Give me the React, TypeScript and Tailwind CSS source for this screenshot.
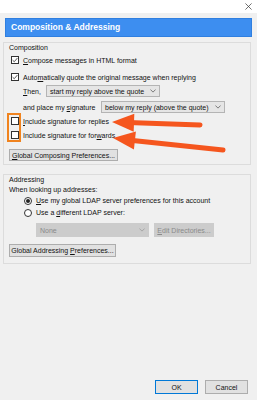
import React from 'react';

function Check({ checked }: { checked?: boolean }) {
  return (
    <span className="w-[8px] h-[8px] border border-[#333333] bg-white flex items-center justify-center shrink-0">
      {checked && (
        <svg viewBox="0 0 8 8" className="w-[6px] h-[6px]">
          <path d="M0.8 4.2 L3 6.3 L7.2 1.4" fill="none" stroke="#222222" strokeWidth="1" />
        </svg>
      )}
    </span>
  );
}

function Radio({ checked }: { checked?: boolean }) {
  return (
    <span className="w-[8px] h-[8px] rounded-full border border-[#333333] bg-white flex items-center justify-center shrink-0">
      {checked && <span className="w-[4px] h-[4px] rounded-full bg-[#222222]" />}
    </span>
  );
}

function Chevron({ color = '#555555' }: { color?: string }) {
  return (
    <svg viewBox="0 0 8 5" className="w-[6px] h-[4px]">
      <path d="M0.5 0.5 L4 4 L7.5 0.5" fill="none" stroke={color} strokeWidth="1" />
    </svg>
  );
}

const U = ({ children }: { children: React.ReactNode }) => (
  <span className="underline underline-offset-[1px] decoration-[0.5px]">{children}</span>
);

export default function App() {
  return (
    <div className="relative w-[257px] h-[400px] overflow-hidden bg-[#f0f0f0] text-[7px] text-[#111111] font-['Liberation_Sans',Arial,sans-serif] leading-none">
      {/* title strip */}
      <div className="h-[13px] bg-white flex justify-end items-center pr-[5px]">
        <svg viewBox="0 0 8 8" className="w-[7px] h-[7px]">
          <path d="M0.5 0.5 L7.5 7.5 M7.5 0.5 L0.5 7.5" stroke="#333333" strokeWidth="0.8" />
        </svg>
      </div>

      {/* header */}
      <div className="mt-[5px] mx-[5px] h-[19px] bg-[#3d8ef0] border border-[#2f7fe0] flex items-center pl-[5px]">
        <span className="text-white font-bold text-[8.5px]">Composition &amp; Addressing</span>
      </div>

      {/* Composition group */}
      <div className="mt-[5px] ml-[3px] w-[248px] h-[123px] border border-[#dcdcdc] pl-[5px] flex flex-col">
        <div className="h-[8px] flex items-center">Composition</div>
        <div className="h-[18px] flex items-center gap-[4px] pl-[2px]">
          <Check checked />
          <span><U>C</U>ompose messages in HTML format</span>
        </div>
        <div className="h-[16px] flex items-center gap-[4px] pl-[2px]">
          <Check checked />
          <span>Auto<U>m</U>atically quote the original message when replying</span>
        </div>
        <div className="h-[12px] flex items-center pl-[14px]">
          <span className="w-[23px]"><U>T</U>hen,</span>
          <div className="w-[114px] h-[12px] bg-[#e5e5e5] border border-[#b4b4b4] flex items-center justify-between pl-[3px] pr-[3px]">
            <span>start my reply above the quote</span>
            <Chevron />
          </div>
        </div>
        <div className="h-[4px]" />
        <div className="h-[12px] flex items-center pl-[14px]">
          <span className="w-[78px]">and place my <U>s</U>ignature</span>
          <div className="w-[124px] h-[12px] bg-[#e5e5e5] border border-[#b4b4b4] flex items-center justify-between pl-[3px] pr-[3px]">
            <span>below my reply (above the quote)</span>
            <Chevron />
          </div>
        </div>
        <div className="h-[16px] flex items-center gap-[4px] pl-[2px]">
          <Check />
          <span><U>I</U>nclude signature for replies</span>
        </div>
        <div className="h-[12px] flex items-center gap-[4px] pl-[2px]">
          <Check />
          <span>Include signature for for<U>w</U>ards</span>
        </div>
        <div className="h-[8px]" />
        <div className="flex">
          <div className="w-[109px] h-[12px] bg-[#e1e1e1] border border-[#adadad] flex items-center justify-center">
            <span><U>G</U>lobal Composing Preferences...</span>
          </div>
        </div>
      </div>

      {/* Addressing group */}
      <div className="mt-[9px] ml-[3px] w-[248px] h-[90px] border border-[#dcdcdc] pl-[5px] flex flex-col">
        <div className="h-[9px] flex items-center">Addressing</div>
        <div className="h-[11px] flex items-center">When looking up addresses:</div>
        <div className="h-[11px] flex items-center gap-[4px] pl-[15px]">
          <Radio checked />
          <span><U>U</U>se my global LDAP server preferences for this account</span>
        </div>
        <div className="h-[13px] flex items-center gap-[4px] pl-[15px]">
          <Radio />
          <span>Use a <U>d</U>ifferent LDAP server:</span>
        </div>
        <div className="h-[4px]" />
        <div className="h-[14px] flex items-center gap-[5px] pl-[27px]">
          <div className="w-[113px] h-[14px] bg-[#cccccc] flex items-center justify-between pl-[4px] pr-[4px] text-[#8a8a8a]">
            <span>None</span>
            <Chevron color="#9a9a9a" />
          </div>
          <div className="w-[60px] h-[14px] bg-[#cccccc] flex items-center justify-center text-[#8a8a8a]">
            <span><U>E</U>dit Directories...</span>
          </div>
        </div>
        <div className="h-[7px]" />
        <div className="flex">
          <div className="w-[107px] h-[13px] bg-[#e1e1e1] border border-[#adadad] flex items-center justify-center">
            <span>Global Addressing <U>P</U>references...</span>
          </div>
        </div>
      </div>

      {/* bottom buttons */}
      <div className="absolute left-0 right-0 top-[380px] flex justify-end gap-[7px] pr-[9px]">
        <div className="w-[43px] h-[14px] bg-[#e1e1e1] border border-[#0078d7] flex items-center justify-center">OK</div>
        <div className="w-[43px] h-[14px] bg-[#e1e1e1] border border-[#adadad] flex items-center justify-center">Cancel</div>
      </div>

      {/* annotation overlay */}
      <svg className="absolute inset-0 pointer-events-none" width="257" height="400" viewBox="0 0 257 400">
        <rect x="8" y="114" width="12" height="27" fill="none" stroke="#f0831e" strokeWidth="2" />
        <line x1="200" y1="125" x2="128" y2="122.5" stroke="#f5561e" strokeWidth="5" strokeLinecap="round" />
        <polygon points="112,122 134.3,113.7 133.7,131.7" fill="#f5561e" />
        <line x1="223" y1="150" x2="128" y2="140" stroke="#f5561e" strokeWidth="5" strokeLinecap="round" />
        <polygon points="113,138 135.9,131.4 133.9,149.4" fill="#f5561e" />
      </svg>
    </div>
  );
}
